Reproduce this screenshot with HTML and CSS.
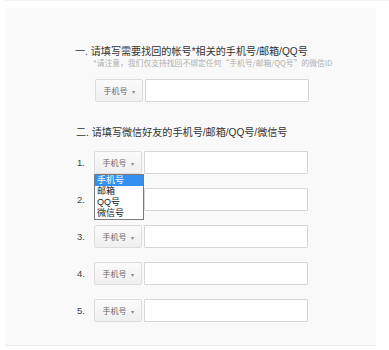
FILE: index.html
```html
<!DOCTYPE html>
<html lang="zh-CN">
<head>
    <meta charset="UTF-8" />
    <meta name="viewport" content="width=device-width, initial-scale=1" />
    <title>找回帐号</title>
    <link rel="stylesheet" href="styles.css">
</head>
<body>
<div class="topline"></div>
<div class="panel">
    <h2 class="title">一. 请填写需要找回的帐号*相关的手机号/邮箱/QQ号</h2>
    <p class="note">*请注意，我们仅支持找回不绑定任何“手机号/邮箱/QQ号”的微信ID</p>
    <div class="row row-self">
        <button class="type-btn">手机号<span class="caret">▾</span></button>
        <input type="text" class="field" />
    </div>

    <h2 class="title title-2">二. 请填写微信好友的手机号/邮箱/QQ号/微信号</h2>
    <div class="friends">
        <div class="row">
            <span class="num">1.</span>
            <div class="select-wrap">
                <button class="type-btn">手机号<span class="caret">▾</span></button>
                <ul class="dropdown">
                    <li class="active">手机号</li>
                    <li>邮箱</li>
                    <li>QQ号</li>
                    <li>微信号</li>
                </ul>
            </div>
            <input type="text" class="field" />
        </div>
        <div class="row">
            <span class="num">2.</span>
            <button class="type-btn covered">手机号<span class="caret">▾</span></button>
            <input type="text" class="field" />
        </div>
        <div class="row">
            <span class="num">3.</span>
            <button class="type-btn">手机号<span class="caret">▾</span></button>
            <input type="text" class="field" />
        </div>
        <div class="row">
            <span class="num">4.</span>
            <button class="type-btn">手机号<span class="caret">▾</span></button>
            <input type="text" class="field" />
        </div>
        <div class="row">
            <span class="num">5.</span>
            <button class="type-btn">手机号<span class="caret">▾</span></button>
            <input type="text" class="field" />
        </div>
    </div>
</div>
</body>
</html>
```

FILE: styles.css
```css
:root {
    --panel-bg: #f9f9f9;
    --text: #333;
    --muted: #b0b0b0;
    --border: #d6d6d6;
    --highlight: #3390f0;
}
body {
    margin: 0;
    background-color: #fff;
    font-family: "Liberation Sans", "Noto Sans CJK SC", sans-serif;
    color: var(--text);
}
.topline {
    height: 1px;
    margin-left: 5px;
    background-color: #f2f2f2;
}
.panel {
    margin: 7px 13px 0 5px;
    height: 338px;
    box-sizing: border-box;
    padding: 37px 0 0 70px;
    background-color: var(--panel-bg);
    border-bottom: 1px solid #ececec;
}
.title {
    margin: 0;
    font-size: 10.1px;
    line-height: 13px;
    font-weight: normal;
    color: #333;
}
.title-2 {
    margin-top: 24px;
    margin-left: 1px;
}
.note {
    margin: 0 0 0 18px;
    font-family: "Noto Sans CJK SC", sans-serif;
    font-size: 7.8px;
    line-height: 10px;
    color: var(--muted);
}
.row {
    display: flex;
    align-items: center;
    height: 23px;
}
.row-self {
    margin: 11px 0 0 20px;
}
.friends {
    margin-top: 12px;
}
.friends .row {
    margin-bottom: 14px;
}
.num {
    width: 19px;
    padding-left: 2px;
    box-sizing: border-box;
    font-size: 9.5px;
    color: #444;
}
.select-wrap {
    position: relative;
    display: flex;
}
.type-btn {
    width: 48px;
    height: 23px;
    padding: 0;
    margin-right: 2px;
    font-family: inherit;
    font-size: 8px;
    color: #666;
    background: linear-gradient(#fbfbfb, #efefef);
    border: 1px solid #dcdcdc;
    border-radius: 2px;
    box-sizing: border-box;
}
.type-btn.covered {
    visibility: hidden;
}
.caret {
    margin-left: 4px;
    font-size: 6px;
    color: #888;
}
.field {
    width: 164px;
    height: 23px;
    box-sizing: border-box;
    background-color: #fff;
    border: 1px solid var(--border);
    border-radius: 1px;
}
.dropdown {
    position: absolute;
    top: 23px;
    left: 0;
    width: 50px;
    margin: 0;
    padding: 0;
    list-style: none;
    background-color: #fff;
    border: 1px solid #7a7a7a;
    box-sizing: border-box;
    z-index: 2;
}
.dropdown li {
    height: 11px;
    line-height: 11px;
    padding-left: 2px;
    font-size: 9px;
    color: #222;
}
.dropdown li.active {
    background-color: var(--highlight);
    color: #fff;
}
```
